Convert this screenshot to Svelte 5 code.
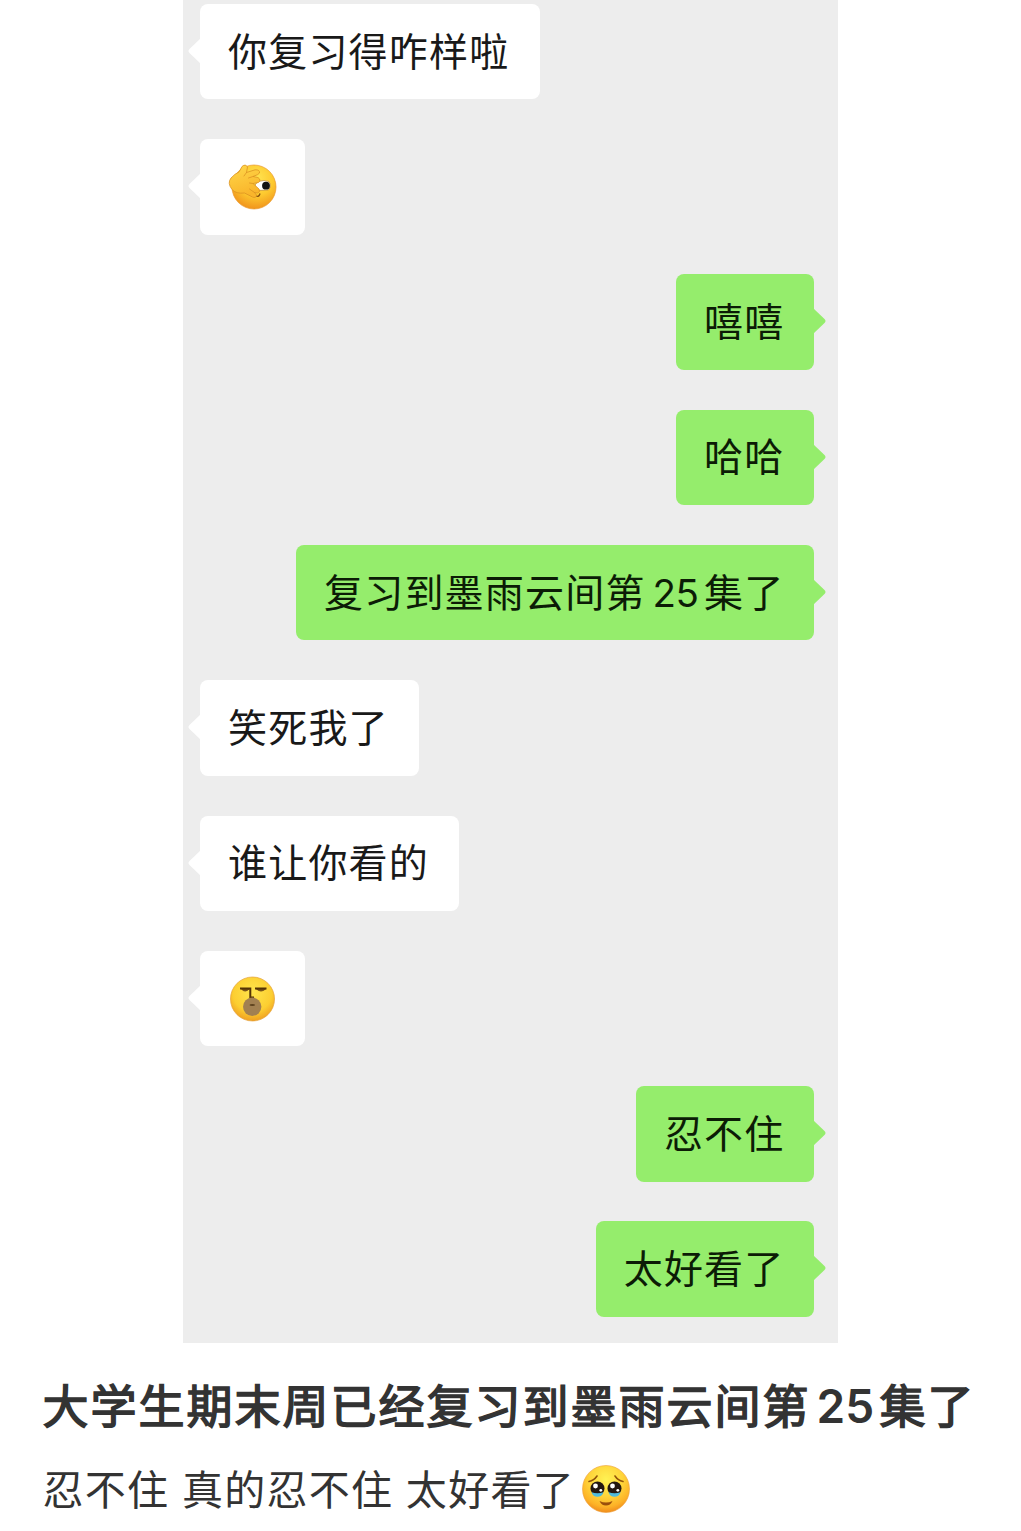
<script>
  const messages = [
    { side: 'left', text: '你复习得咋样啦' },
    { side: 'left', emoji: 'peek' },
    { side: 'right', text: '嘻嘻' },
    { side: 'right', text: '哈哈' },
    { side: 'right', text: '复习到墨雨云间第', number: '25', tail: '集了' },
    { side: 'left', text: '笑死我了' },
    { side: 'left', text: '谁让你看的' },
    { side: 'left', emoji: 'shush' },
    { side: 'right', text: '忍不住' },
    { side: 'right', text: '太好看了' },
  ];
</script>

{#snippet peek()}
  <svg class="face" viewBox="0 0 50 48" role="img" aria-label="捂脸偷看">
    <defs>
      <radialGradient id="peekFace" cx="0.55" cy="0.3" r="0.72">
        <stop offset="0" stop-color="#ffe552" />
        <stop offset="0.55" stop-color="#fdc92f" />
        <stop offset="1" stop-color="#f0911b" />
      </radialGradient>
      <linearGradient id="peekHand" x1="0" y1="0" x2="0.3" y2="1">
        <stop offset="0" stop-color="#ffd84a" />
        <stop offset="1" stop-color="#f9b52b" />
      </linearGradient>
    </defs>
    <circle cx="26" cy="24" r="22" fill="url(#peekFace)" stroke="#e99a2d" stroke-width="0.7" />
    <path d="M27 32.5 Q31 35 32 30.5" fill="none" stroke="#8c5710" stroke-width="1.4" />
    <path d="M27 22 L30 18.5 Q36 16.5 41 18.5 Q44 23 40.5 27 L29 27.5 Z" fill="#fff" stroke="#bd842a" stroke-width="0.7" />
    <circle cx="38" cy="22.7" r="3.9" fill="#111" />
    <path d="M3 15 Q7 10.5 11 9 L14 3.5 Q17.5 0.5 19.5 4 L18.5 9.5 L27 6.8 Q32 6.5 31.5 10 Q31 11.5 25 13.5 L30 14.5 Q33.5 17 30.5 19.5 L25 20.5 L31 26 Q33 29 29.5 30 L26.5 29.5 L28.5 32 Q28.5 35.5 24.5 34 L16.5 30 Q8 31 4 26.5 Q-1 20 3 15Z" fill="url(#peekHand)" stroke="#dc9322" stroke-width="0.8" stroke-linejoin="round" />
    <path d="M18.5 9.5 L16 13 M25 13.5 L20.5 15 M25 20.5 L21.5 20 M26.5 29.5 L21.5 26" fill="none" stroke="#dc9322" stroke-width="0.8" stroke-linecap="round" />
  </svg>
{/snippet}

{#snippet shush()}
  <svg class="face" viewBox="0 0 50 48" role="img" aria-label="闭眼呼气">
    <defs>
      <radialGradient id="shushFace" cx="0.5" cy="0.35" r="0.68">
        <stop offset="0" stop-color="#ffe54c" />
        <stop offset="0.65" stop-color="#fcce31" />
        <stop offset="1" stop-color="#ee991f" />
      </radialGradient>
    </defs>
    <circle cx="24.5" cy="24" r="22" fill="url(#shushFace)" stroke="#e4a13a" stroke-width="0.7" />
    <path d="M13.5 14 Q17 18 21 14Z M28.5 14 Q33 18 37.5 14Z" fill="#765018" stroke="#765018" />
    <path d="M12 13.5 H22.3 V22.5 H26 M27 13.5 H38.5" fill="none" stroke="#543305" stroke-width="2" />
    <circle cx="24.2" cy="31.7" r="9.2" fill="#a28051" />
    <ellipse cx="24.3" cy="30" rx="2.8" ry="1.1" fill="#5e431f" />
  </svg>
{/snippet}

{#snippet tearful()}
  <svg class="tearful" viewBox="0 0 50 50" role="img" aria-label="忍住泪水">
    <defs>
      <radialGradient id="tearFace" cx="0.5" cy="0.3" r="0.72">
        <stop offset="0" stop-color="#fff253" />
        <stop offset="0.5" stop-color="#ffd43a" />
        <stop offset="0.8" stop-color="#fdb227" />
        <stop offset="1" stop-color="#ee861b" />
      </radialGradient>
    </defs>
    <circle cx="25" cy="25" r="23.5" fill="url(#tearFace)" stroke="#eda03a" stroke-width="0.6" />
    <path d="M8 17.5 Q13 16.5 16 12 M34 12 Q37 16.5 42 17.5" fill="none" stroke="#91530a" stroke-width="1.6" stroke-linecap="round" />
    <circle cx="16.5" cy="24.5" r="7" fill="#241811" />
    <circle cx="33.5" cy="24.5" r="7" fill="#241811" />
    <path d="M10.5 28.3 Q16.5 30 22.5 28.3 Q21 32.8 16.5 32.8 Q12 32.8 10.5 28.3Z M27.5 28.3 Q33.5 30 39.5 28.3 Q38 32.8 33.5 32.8 Q29 32.8 27.5 28.3Z" fill="#50bbdc" />
    <circle cx="14.5" cy="22" r="2.4" fill="#fff" />
    <circle cx="31.5" cy="22" r="2.4" fill="#fff" />
    <circle cx="19.8" cy="26.3" r="1.4" fill="#fff" />
    <circle cx="36.8" cy="26.3" r="1.4" fill="#fff" />
    <path d="M18.5 37 Q25 40 31.5 37 Q29.5 41.5 25 41.5 Q20.5 41.5 18.5 37Z" fill="#9a4f0c" />
  </svg>
{/snippet}

<main>
  <section class="chat">
    {#each messages as message}
      <div class="bubble {message.side}" class:sticker={message.emoji}>
        {#if message.emoji === 'peek'}
          {@render peek()}
        {:else if message.emoji === 'shush'}
          {@render shush()}
        {:else}
          <span class="text">{message.text}{#if message.number}<span class="number">{message.number}</span>{message.tail}{/if}</span>
        {/if}
        <svg class="pointer" viewBox="0 0 13 26" aria-hidden="true">
          <path d="M0 0 L11.5 11 Q13.5 13 11.5 15 L0 26Z" />
        </svg>
      </div>
    {/each}
  </section>
  <section class="caption">
    <h1>大学生期末周已经复习到墨雨云间第<span class="number">25</span>集了</h1>
    <p>忍不住 真的忍不住 太好看了{@render tearful()}</p>
  </section>
</main>

<style>
  :global(body) {
    margin: 0;
    background: #fff;
  }

  main {
    height: 1531px;
    overflow: hidden;
    font-family: 'Noto Sans CJK SC', sans-serif;
    color: #333;
  }

  .chat {
    box-sizing: border-box;
    width: 655px;
    height: 1342.5px;
    margin-left: 183px;
    padding: 3.8px 24.5px 0 17px;
    display: flex;
    flex-direction: column;
    gap: 39.8px;
    background: #ededed;
  }

  .bubble {
    position: relative;
    box-sizing: border-box;
    height: 95.5px;
    flex: none;
    display: flex;
    align-items: center;
    padding: 0 29px 0 28px;
    border-radius: 8px;
    font-size: 39px;
    line-height: 56px;
    letter-spacing: 1.2px;
    white-space: nowrap;
    color: #191919;
  }

  .text {
    padding-bottom: 6px;
  }

  .left {
    align-self: flex-start;
    padding-right: 30.3px;
    background: #fff;
  }

  .right {
    align-self: flex-end;
    background: #95ed6c;
    color: #0c1c06;
  }

  .pointer {
    position: absolute;
    top: 34px;
    width: 13px;
    height: 26px;
  }

  .left .pointer {
    left: -12.5px;
    transform: scaleX(-1);
    fill: #fff;
  }

  .right .pointer {
    right: -12.5px;
    fill: #95ed6c;
  }

  .sticker {
    width: 105px;
  }

  .face {
    width: 50px;
    height: 48px;
    flex: none;
  }

  .number {
    font-family: Inter, sans-serif;
    line-height: 1;
  }

  .bubble .number {
    margin: 0 6px 0 7px;
    font-size: 38.5px;
    letter-spacing: -0.7px;
  }

  .caption {
    padding: 24px 42.5px 0;
  }

  h1 {
    margin: 0;
    font-size: 46px;
    line-height: 72px;
    font-weight: 400;
    letter-spacing: 2px;
    white-space: nowrap;
    -webkit-text-stroke: 1.5px #333;
  }

  h1 .number {
    margin: 0 5.5px 0 6px;
    font-weight: 600;
    font-size: 46px;
    letter-spacing: 0;
    -webkit-text-stroke: 0;
  }

  p {
    display: flex;
    align-items: center;
    margin: 13px 0 0;
    font-size: 41px;
    line-height: 70px;
    letter-spacing: 1.3px;
    word-spacing: 2px;
    white-space: pre;
  }

  .tearful {
    width: 50px;
    height: 50px;
    margin: 4px 0 0 5.5px;
  }
</style>
